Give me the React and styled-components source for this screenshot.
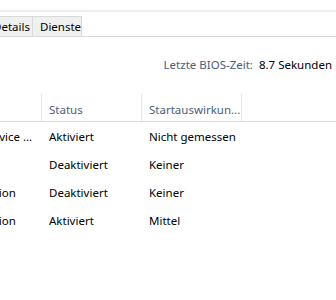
import React from "react";
import styled, { createGlobalStyle } from "styled-components";

const rows = [
  { name: "AMD Audio Device Manager", status: "Aktiviert", impact: "Nicht gemessen" },
  { name: "Update", status: "Deaktiviert", impact: "Keiner" },
  { name: "Zoom Application", status: "Deaktiviert", impact: "Keiner" },
  { name: "Zoom Application", status: "Aktiviert", impact: "Mittel" },
];

const App = () => {
  return (
    <Page>
      <GlobalStyle />
      <TopStrip />
      <TabBar>
        <Tab width={47}>Details</Tab>
        <Tab width={49}>Dienste</Tab>
      </TabBar>
      <BiosRow>
        <BiosLabel>Letzte BIOS-Zeit:</BiosLabel>
        <BiosValue>8.7 Sekunden</BiosValue>
      </BiosRow>
      <Table>
        <HeaderRow>
          <HeaderCell width={128} />
          <HeaderCell width={100}>Status</HeaderCell>
          <HeaderCell width={100}>Startauswirkun...</HeaderCell>
        </HeaderRow>
        {rows.map((row, i) => (
          <Row key={i}>
            <Cell width={128}>{row.name}</Cell>
            <Cell width={100}>{row.status}</Cell>
            <Cell width={100}>{row.impact}</Cell>
          </Row>
        ))}
      </Table>
    </Page>
  );
};

export default App;

const GlobalStyle = createGlobalStyle`
  body {
    margin: 0;
    background: #ffffff;
    font-family: "Noto Sans", "Segoe UI", sans-serif;
    font-size: 11.5px;
    color: #000000;
  }
`;

const Page = styled.div`
  width: 336px;
  height: 300px;
  overflow: hidden;
  background: #ffffff;
`;

const TopStrip = styled.div`
  height: 10px;
  border-bottom: 2px solid #f0f0f0;
`;

const TabBar = styled.div`
  display: flex;
  margin-top: 4px;
  margin-left: -14px;
  height: 20px;
  border-bottom: 1px solid #d9d9d9;
`;

const Tab = styled.div`
  box-sizing: border-box;
  width: ${(p) => p.width}px;
  height: 21px;
  padding-left: 7px;
  background: #f0f0f0;
  border: 1px solid #d9d9d9;
  border-left: none;
  display: flex;
  align-items: center;
  line-height: 1;
  white-space: nowrap;
  overflow: hidden;
`;

const BiosRow = styled.div`
  display: flex;
  justify-content: flex-end;
  gap: 6px;
  padding: 20px 4px 0 0;
  height: 20px;
`;

const BiosLabel = styled.span`
  color: #4c607a;
`;

const BiosValue = styled.span`
  color: #000000;
`;

const Table = styled.div`
  margin-top: 17px;
  margin-left: -86px;
`;

const HeaderRow = styled.div`
  display: flex;
  height: 27px;
  border-bottom: 1px solid #dcdcdc;
`;

const HeaderCell = styled.div`
  box-sizing: border-box;
  width: ${(p) => p.width}px;
  flex-shrink: 0;
  padding: 3px 0 0 7px;
  display: flex;
  align-items: center;
  color: #4c607a;
  border-right: 1px solid #e5e5e5;
  white-space: nowrap;
`;

const Row = styled.div`
  display: flex;
  height: 28px;
  align-items: center;
`;

const Cell = styled.div`
  box-sizing: border-box;
  width: ${(p) => p.width}px;
  flex-shrink: 0;
  padding: 0 6px 0 7px;
  white-space: nowrap;
  overflow: hidden;
  text-overflow: ellipsis;
`;
